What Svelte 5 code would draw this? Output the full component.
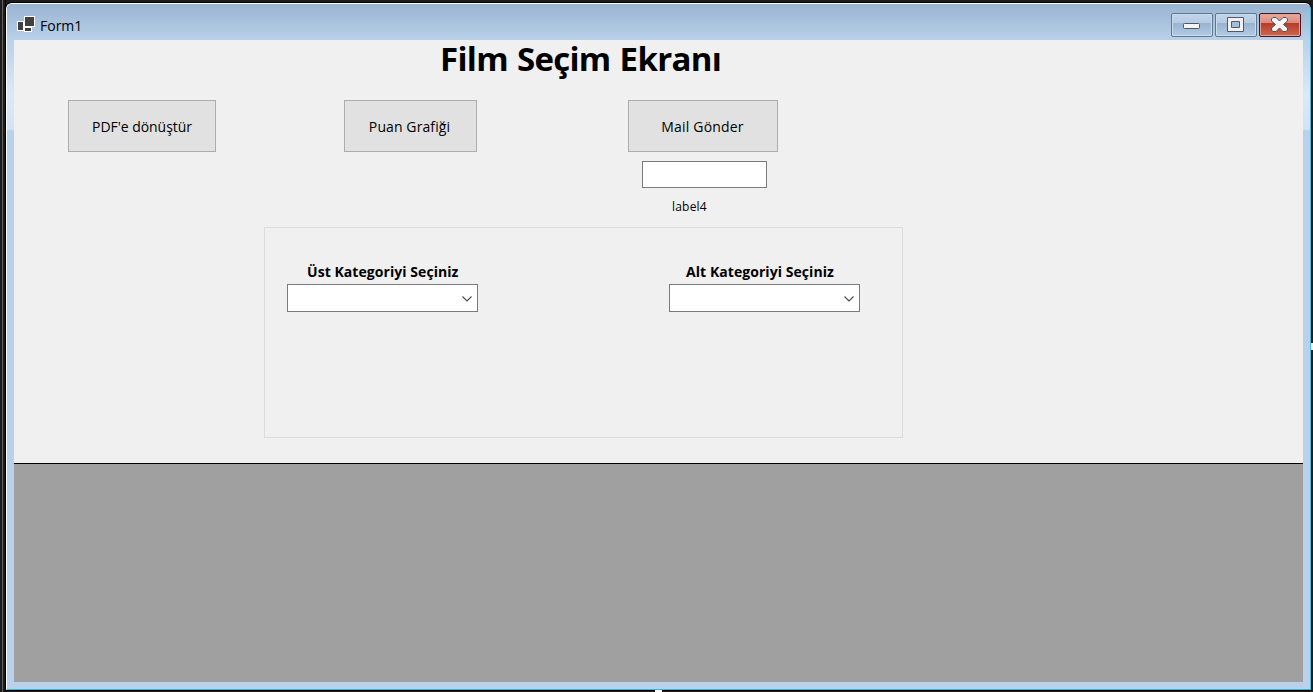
<script>
  const categories = [
    { label: 'Üst Kategoriyi Seçiniz', kind: 'main' },
    { label: 'Alt Kategoriyi Seçiniz', kind: 'sub' }
  ];
</script>

<div class="desktop">
  <div class="window">
    <header class="titlebar">
      <svg class="app-icon" width="18" height="16" viewBox="0 0 18 16" shape-rendering="crispEdges">
        <path fill="#fff" d="M7 0h11v11h-3v5H7v-1H0V5h7z" />
        <path fill="#404040" d="M8 1h9v9H8zM1 6h5v8H1zM8 12h6v3H8z" />
      </svg>
      <span class="caption">Form1</span>
      <div class="controls">
        <span class="control">
          <svg width="42" height="24" viewBox="0 0 42 24">
            <rect x="12.5" y="10.5" width="16" height="5" rx="1" fill="#f4f4f4" stroke="#51586b" />
          </svg>
        </span>
        <span class="control">
          <svg width="42" height="24" viewBox="0 0 42 24">
            <path d="M12.5 4.5h16v14h-16z" fill="#f0f0f0" stroke="#51586b" />
            <path d="M16.5 8.5h8v6h-8z" fill="#a2bedb" stroke="#51586b" />
          </svg>
        </span>
        <span class="control close">
          <svg width="42" height="24" viewBox="0 0 42 24">
            <path d="M14 4.500h3l3.500 3.500 3.500-3.500h3l1.500 1.500v2l-4 3.500 4 3.500v2l-1.500 1.500h-3l-3.500-3.500-3.500 3.500h-3l-1.500-1.500v-2l4-3.500-4-3.500v-2z" fill="#f4f4f4" stroke="#51505e" stroke-linejoin="round" />
          </svg>
        </span>
      </div>
    </header>
    <main>
      <section class="form">
        <h1>Film Seçim Ekranı</h1>
        <div class="actions">
          <button class="pdf">PDF'e dönüştür</button>
          <button class="chart">Puan Grafiği</button>
          <div class="mail-column">
            <button class="mail">Mail Gönder</button>
            <input type="text" aria-label="Mail" />
            <span class="status">label4</span>
          </div>
        </div>
        <div class="group">
          {#each categories as category}
            <div class="field {category.kind}">
              <span class="field-label">{category.label}</span>
              <div class="combo">
                <svg width="10" height="6" viewBox="0 0 10 6"><path d="M.5.5 5 5 9.500.5" fill="none" stroke="#4a4a4a" stroke-width="1.100" /></svg>
              </div>
            </div>
          {/each}
        </div>
      </section>
      <section class="grid-view"></section>
    </main>
  </div>
  <i class="handle right"></i>
  <i class="handle bottom"></i>
</div>

<style>
  :global(body) { margin: 0; overflow: hidden; }
  .desktop {
    position: relative;
    box-sizing: border-box;
    width: 1313px;
    height: 692px;
    padding: 3px 2px 2px 6px;
    font-family: "Open Sans", "Noto Sans", sans-serif;
    color: #000;
    background: linear-gradient(90deg, #1c1c1c 2px, #626262 2px 3px, #1c1c1c 3px 5px, #000 5px 6px, #1c1c1c 6px);
  }
  .window {
    box-sizing: border-box;
    height: 687px;
    display: flex;
    flex-direction: column;
    border: 1px solid #fff;
    border-right-color: #35c5e0;
    border-bottom-color: #35b8d2;
    border-radius: 6px 6px 0 0;
    background: linear-gradient(#98b4d2 0, #a9c4e0 22px, #b9d1ea 36px, #dce8f6 90px, #d3e3f4 125px, #b9d1ea 127px);
    box-shadow: 0 0 0 1px #000;
  }
  .titlebar {
    height: 36px;
    flex: none;
    display: flex;
    align-items: flex-start;
    padding-left: 10px;
    box-sizing: border-box;
    border-radius: 5px 5px 0 0;
    background: linear-gradient(#99b4d1, #b9d1ea);
  }
  .app-icon { margin-top: 12px; }
  .caption { margin: 12px 0 0 5px; font-size: 14px; line-height: 20px; }
  .controls { display: flex; gap: 2px; margin: 9px 9px 0 auto; }
  .control {
    box-sizing: border-box;
    width: 42px;
    height: 24px;
    border: 1px solid #60758e;
    border-radius: 2px;
    background: linear-gradient(#c1d5e9, #b5cbe2 9px, #98b3cf 9px, #b3cbe5);
    box-shadow: inset 0 0 0 1px #cbdced;
  }
  .control svg { display: block; margin: -1px; }
  .close {
    border-color: #4b1421;
    background: linear-gradient(#e6aaa0, #d98b7e 9px, #b83a25 9px, #cc6651);
    box-shadow: inset 0 0 0 1px #e0a095;
  }
  main { flex: 1; margin: 0 7px 7px; display: flex; flex-direction: column; }
  .form { box-sizing: border-box; height: 424px; background: #f0f0f0; border-bottom: 1px solid #000; }
  h1 {
    height: 60px;
    margin: 0 0 0 426px;
    font-size: 33px;
    font-weight: 700;
    line-height: 38px;
    letter-spacing: -0.7px;
    word-spacing: 1.2px;
    white-space: nowrap;
  }
  .actions { height: 127px; display: flex; align-items: flex-start; padding-left: 54px; }
  button {
    box-sizing: border-box;
    height: 52px;
    padding: 1px 1px 0 0;
    border: 1px solid #adadad;
    background: #e1e1e1;
    font: 14px/20px "Open Sans", "Noto Sans", sans-serif;
    color: #000;
    white-space: nowrap;
  }
  .pdf { width: 148px; padding-right: 0; letter-spacing: -0.05px; }
  .chart { width: 133px; margin-left: 128px; padding-right: 2px; letter-spacing: 0.1px; }
  .mail-column { width: 150px; margin-left: 151px; display: flex; flex-direction: column; }
  .mail { width: 150px; padding-right: 1px; letter-spacing: 0.18px; }
  input {
    box-sizing: border-box;
    width: 125px;
    height: 27px;
    margin: 9px 0 0 14px;
    border: 1px solid #7a7a7a;
    background: #fff;
    outline: none;
  }
  .status { margin: 10px 0 0 44px; font-size: 12px; line-height: 18px; letter-spacing: 0.2px; }
  .group {
    box-sizing: border-box;
    width: 639px;
    height: 211px;
    margin-left: 250px;
    padding: 33px 22px;
    display: flex;
    gap: 191px;
    border: 1px solid #dcdcdc;
  }
  .field { width: 191px; }
  .field-label {
    display: block;
    height: 23px;
    padding-left: 20px;
    font-size: 14px;
    font-weight: 700;
    line-height: 22px;
    letter-spacing: 0.06px;
    white-space: nowrap;
  }
  .sub .field-label { padding-left: 17px; }
  .combo {
    box-sizing: border-box;
    height: 28px;
    padding: 1px 5px 0 0;
    display: flex;
    align-items: center;
    justify-content: flex-end;
    border: 1px solid #7a7a7a;
    background: #fff;
  }
  .grid-view { flex: 1; background: #a0a0a0; }
  .handle { position: absolute; background: #fff; }
  .right { left: 1311px; top: 343px; width: 2px; height: 7px; }
  .bottom { left: 655px; top: 690px; width: 7px; height: 2px; }
</style>
